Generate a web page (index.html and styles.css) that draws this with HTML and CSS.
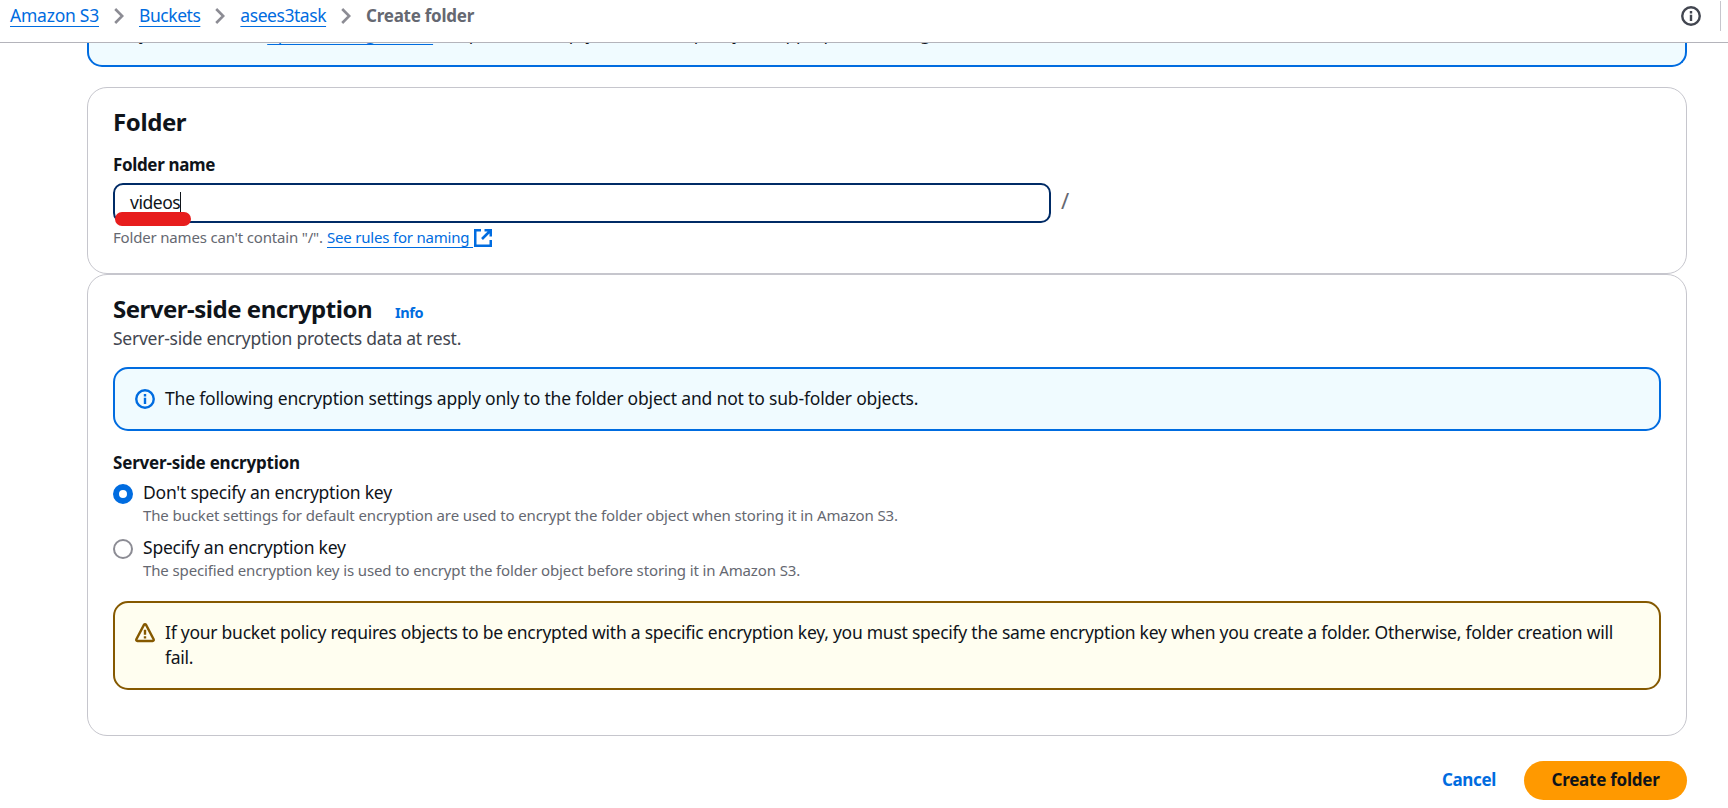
FILE: index.html
```
<!DOCTYPE html>
<html lang="en">
<head>
<meta charset="utf-8">
<title>Create folder</title>
<link rel="stylesheet" href="styles.css">
</head>
<body>
<header class="topbar">
  <nav class="crumbs">
    <a class="link crumb-s3" href="#">Amazon S3</a>
    <svg class="chevron" viewBox="0 0 10 16"><path d="M1.2 1 8.2 8l-7 7"/></svg>
    <a class="link crumb" href="#">Buckets</a>
    <svg class="chevron" viewBox="0 0 10 16"><path d="M1.2 1 8.2 8l-7 7"/></svg>
    <a class="link crumb" href="#">asees3task</a>
    <svg class="chevron" viewBox="0 0 10 16"><path d="M1.2 1 8.2 8l-7 7"/></svg>
    <span class="current">Create folder</span>
  </nav>
  <div class="tools">
    <svg class="icon grey" viewBox="0 0 20 20"><circle cx="10" cy="10" r="8.75"/><path d="M10 8.7v6.2M10 5v2.4"/></svg>
    <span class="divider"></span>
  </div>
</header>
<main class="page">
  <div class="notice"><p class="notice-text">you can use the <a class="link" href="#">upload configuration</a><span class="notice-rest"> to upload an empty folder and specify the appropriate settings.</span></p></div>

  <section class="card folder">
    <h2 class="heading">Folder</h2>
    <label class="label name-label">Folder name</label>
    <div class="field-row">
      <div class="input"><span class="value">videos</span><span class="caret"></span><span class="marker"></span></div>
      <span class="slash">/</span>
    </div>
    <div class="help"><span class="help-text">Folder names can't contain "/".</span><a class="link help-link" href="#">See rules for naming&nbsp;</a><svg class="external" viewBox="0 0 18 18"><path d="M7 1.2H1.2v15.6h15.6V11M10.5 1.2h6.3v6.3M16.5 1.5 8 10"/></svg></div>
  </section>

  <section class="card encryption">
    <div class="heading-row"><h2 class="heading long">Server-side encryption</h2><a class="info" href="#">Info</a></div>
    <p class="description">Server-side encryption protects data at rest.</p>
    <div class="alert blue">
      <svg class="icon" viewBox="0 0 20 20"><circle cx="10" cy="10" r="8.75"/><path d="M10 8.7v6.2M10 5v2.4"/></svg>
      <p class="alert-text">The following encryption settings apply only to the folder object and not to sub-folder objects.</p>
    </div>
    <div class="label group-label">Server-side encryption</div>
    <div class="option">
      <span class="radio checked"></span>
      <div><div class="option-title">Don't specify an encryption key</div><div class="option-desc">The bucket settings for default encryption are used to encrypt the folder object when storing it in Amazon S3.</div></div>
    </div>
    <div class="option">
      <span class="radio"></span>
      <div><div class="option-title">Specify an encryption key</div><div class="option-desc">The specified encryption key is used to encrypt the folder object before storing it in Amazon S3.</div></div>
    </div>
    <div class="alert amber">
      <svg class="icon" viewBox="0 0 20 20"><path d="M8.9 1.9Q10 .6 11.1 1.9L18.6 16.2Q19.2 17.9 17.6 18H2.4Q.8 17.9 1.4 16.2Z"/><path d="M10 6.8v5M10 13.2v2.4"/></svg>
      <p class="alert-text wide">If your bucket policy requires objects to be encrypted with a specific encryption key, you must specify the same encryption key when you create a folder. Otherwise, folder creation will<br>fail.</p>
    </div>
  </section>

  <div class="actions"><button class="cancel">Cancel</button><button class="create">Create folder</button></div>
</main>
</body>
</html>
```
FILE: styles.css
```
* { box-sizing: border-box; }
body {
  margin: 0;
  height: 808px;
  overflow: hidden;
  background: #fff;
  color: #0f141a;
  font: 17.5px/25px "Noto Sans", sans-serif;
}
h2, p { margin: 0; }
svg { fill: none; flex: none; }
.link {
  color: #006ce0;
  text-decoration: underline 1px;
  text-underline-offset: 4px;
  text-decoration-skip-ink: none;
}

.topbar {
  display: flex;
  justify-content: space-between;
  height: 43px;
  padding: 0 7px 0 10px;
  border-bottom: 1px solid #b4b4bb;
}
.crumbs { display: flex; height: 34px; padding-top: 3px; white-space: nowrap; }
.crumb-s3 { width: 89px; letter-spacing: -.24px; }
.crumb { letter-spacing: -.45px; }
.chevron { width: 10px; height: 16px; margin: 5px 15px 0; stroke: #8c8c94; stroke-width: 2.6; }
.current { color: #656871; font-size: 17px; font-weight: 700; letter-spacing: -.25px; }
.tools { display: flex; gap: 19px; padding-top: 1px; }
.tools .icon { margin-top: 5px; }
.icon { width: 20px; height: 20px; stroke: currentColor; stroke-width: 2.4; }
.grey { color: #424650; }
.divider { width: 1px; height: 30px; background: #c6c6cd; }

.page { padding: 0 41px 0 87px; }
.notice {
  display: flex;
  height: 24px;
  margin-bottom: 20px;
  padding-left: 50px;
  overflow: hidden;
  background: #f0fbff;
  border: solid #006ce0;
  border-width: 0 2px 2px;
  border-radius: 0 0 15px 15px;
}
.notice-text { margin-top: -22px; letter-spacing: -.34px; white-space: nowrap; }
.notice-rest { letter-spacing: -.22px; }

.card { border: 1px solid #c6c6cd; border-radius: 20px; padding: 19px 25px 0; }
.folder { height: 187px; }
.heading { font-size: 24px; line-height: 30px; font-weight: 700; letter-spacing: -.4px; }
.long { letter-spacing: -.49px; }
.label { display: block; font-size: 17px; font-weight: 700; letter-spacing: -.19px; }
.name-label { margin: 15px 0 6px; letter-spacing: -.35px; }
.field-row { display: flex; height: 40px; }
.input {
  position: relative;
  display: flex;
  width: 938px;
  padding: 5px 15px 0;
  border: 2px solid #002b66;
  border-radius: 10px;
}
.value { letter-spacing: -.45px; }
.caret { width: 1px; height: 20px; margin-top: 2px; background: #0f141a; }
.marker {
  position: absolute;
  left: 0;
  top: 27px;
  width: 76px;
  height: 14px;
  border-radius: 7px;
  background: #e71d1d;
}
.slash { margin: 5px 0 0 10px; color: #656871; font-size: 22px; }
.help { display: flex; margin-top: 4px; font-size: 15px; line-height: 20px; white-space: nowrap; }
.help-text { width: 214px; color: #656871; letter-spacing: -.18px; }
.help-link { letter-spacing: -.2px; }
.external { width: 18px; height: 18px; margin: 2px 0 0 1px; stroke: #006ce0; stroke-width: 2.6; }

.encryption { height: 462px; }
.heading-row { display: flex; gap: 23px; height: 30px; }
.info { padding-top: 6px; font-size: 14.5px; font-weight: 700; letter-spacing: -.4px; color: #006ce0; text-decoration: none; }
.description { margin-top: 2px; color: #424650; letter-spacing: -.25px; }
.alert { display: flex; gap: 10px; padding: 17px 20px; border: 2px solid; border-radius: 15px; }
.alert .icon { margin-top: 3px; }
.alert-text { color: #0f141a; letter-spacing: -.18px; white-space: nowrap; }
.wide { letter-spacing: -.252px; }
.blue { height: 64px; margin: 16px 0 19px; color: #006ce0; background: #f0fbff; }
.amber { height: 89px; margin-top: 11px; color: #855900; background: #fffef0; }
.option { display: flex; gap: 10px; margin: 5px 0 10px; }
.radio { width: 20px; height: 20px; margin-top: 4px; border: 2px solid #8c8c94; border-radius: 50%; }
.checked { border: 6px solid #006ce0; }
.option-title { letter-spacing: -.23px; }
.option-desc { font-size: 15px; line-height: 20px; letter-spacing: -.125px; color: #656871; }
.option + .option { margin-bottom: 21px; }

.actions { display: flex; justify-content: flex-end; gap: 28px; margin-top: 25px; }
.cancel, .create { height: 39px; padding: 0 0 2px; border: 0; font: 700 17px/25px "Noto Sans", sans-serif; }
.cancel { background: none; color: #006ce0; letter-spacing: -.35px; }
.create { width: 163px; border-radius: 20px; background: #ff9900; color: #0f141a; letter-spacing: -.25px; }
```
